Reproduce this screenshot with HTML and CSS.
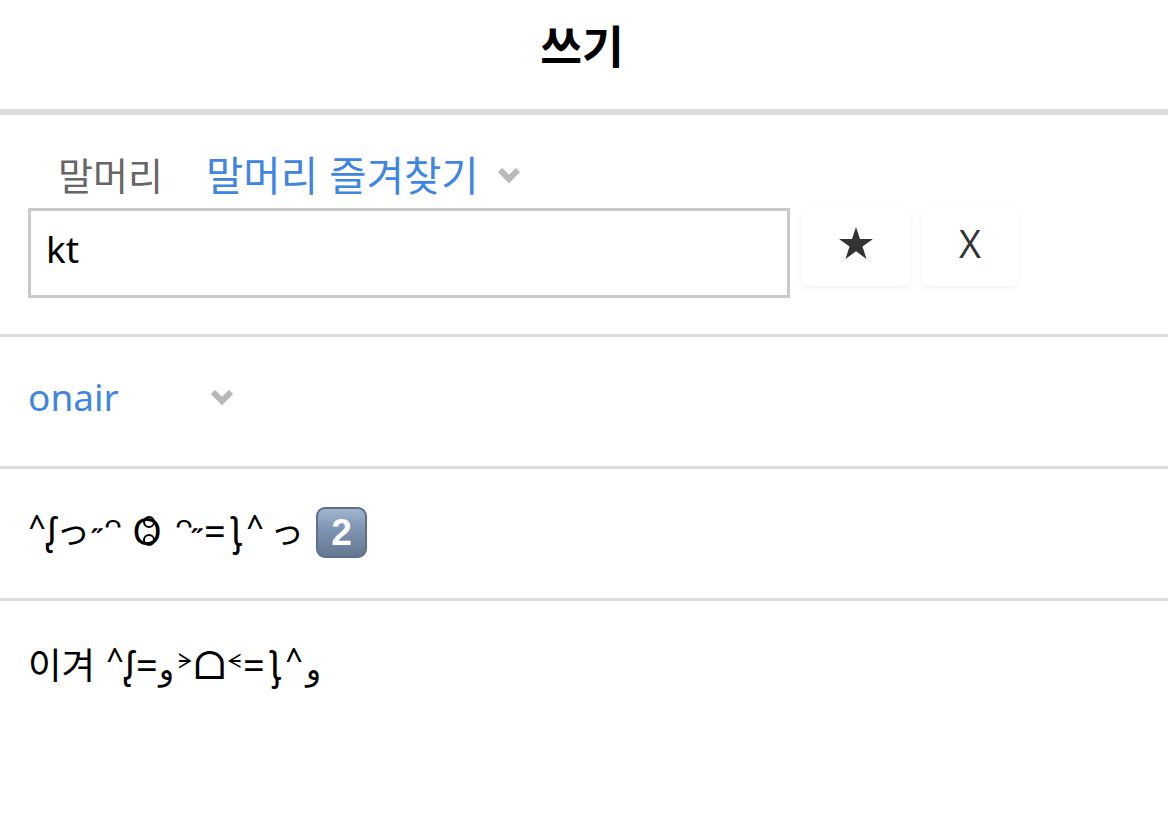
FILE: index.html
```
<!DOCTYPE html>
<html lang="ko">
<head>
  <meta charset="UTF-8" />
  <title>쓰기</title>
  <link rel="stylesheet" href="styles.css">
</head>
<body>

  <header class="header">
    <h1>쓰기</h1>
  </header>

  <form class="write-form">
    <div class="row row-prefix">
      <div class="prefix-line">
        <label class="prefix-label" for="prefix">말머리</label>
        <span class="select">말머리 즐겨찾기</span>
        <svg class="chevron" viewBox="0 0 22 16"><path d="M2 2L11 11L20 2" /></svg>
      </div>
      <div class="prefix-input">
        <input type="text" id="prefix" value="kt" />
        <button type="button" class="btn btn-star"><svg viewBox="0 0 34 32"><path d="M17 0L21 12H34L23.5 19.5L27.5 32L17 24.3L6.500 32L10.500 19.500L0 12H13Z" /></svg></button>
        <button type="button" class="btn btn-clear">X</button>
      </div>
    </div>

    <div class="row row-category">
      <span class="select">onair</span>
      <svg class="chevron" viewBox="0 0 22 16"><path d="M2 2L11 11L20 2" /></svg>
    </div>

    <div class="row row-title">
      <span class="g caret">^</span><span class="g esh">ᶘ</span><span class="g tsu">っ</span><span class="g quote">˶</span><span class="g arc">ᵔ</span><span class="g mouth">O</span><span class="g arc">ᵔ</span><span class="g quote">˶</span><span class="g equal">=</span><span class="g ear">ʅ̡</span><span class="g caret">^</span><span class="g tsu last">っ</span>
      <span class="keycap">2</span>
    </div>

    <div class="row row-content">
      <span class="word">이겨</span><span class="g caret">^</span><span class="g esh">ᶘ</span><span class="g equal">=</span><span class="g waw">و</span><span class="g eye">ᗒ</span><span class="g dome">ᗝ</span><span class="g eye">ᗕ</span><span class="g equal">=</span><span class="g ear">ʅ̡</span><span class="g caret">^</span><span class="g waw">و</span>
    </div>
  </form>

</body>
</html>
```
FILE: styles.css
```
* {
  box-sizing: border-box;
}

body {
  margin: 0;
  font-family: "Noto Sans", "Noto Sans CJK KR", sans-serif;
  font-size: 38px;
  color: #000;
  background: #fff;
}

.header {
  height: 115px;
  padding: 11px 4px 0 0;
  border-bottom: 6px solid #dcdcdc;
}

h1 {
  margin: 0;
  font-family: "Noto Sans CJK KR", sans-serif;
  font-size: 45.5px;
  line-height: 66px;
  font-weight: 700;
  text-align: center;
}

.row {
  display: flex;
  align-items: center;
  height: 132px;
  padding: 0 28px 7px;
  border-bottom: 3px solid #dcdcdc;
}

.row-prefix {
  display: block;
  height: 222px;
  padding-top: 29px;
}

.prefix-line {
  display: flex;
  align-items: center;
  height: 60px;
  margin-bottom: 4px;
  padding-left: 30px;
  font-family: "Noto Sans CJK KR", sans-serif;
  line-height: 60px;
}

.prefix-label {
  width: 148px;
  color: #666;
}

.select {
  color: #3f86e2;
}

.prefix-line .select {
  width: 292px;
  font-size: 40.6px;
  white-space: nowrap;
}

.chevron {
  width: 22px;
  height: 16px;
  fill: none;
  stroke: #b9b9b9;
  stroke-width: 6;
}

.prefix-line .chevron {
  margin-top: 3px;
}

.prefix-input {
  display: flex;
  gap: 12px;
}

.prefix-input input {
  width: 762px;
  height: 90px;
  padding: 0 15px 9px;
  border: 3px solid #c9c9c9;
  font: inherit;
  font-size: 37px;
}

.btn {
  height: 78px;
  padding: 0 0 7px;
  border: none;
  border-radius: 6px;
  background: #fff;
  box-shadow: 0 2px 6px rgba(0, 0, 0, 0.06);
  color: #333;
  font: 38px "Open Sans", sans-serif;
}

.btn-star {
  width: 108px;
}

.btn-star svg {
  width: 34px;
  height: 32px;
  fill: #333;
}

.btn-clear {
  width: 96px;
  padding-bottom: 8px;
}

.row-category .select {
  width: 183px;
  padding-bottom: 4px;
  font-size: 37px;
}

/* kaomoji pieces */
.g {
  display: inline-block;
  direction: ltr;
  font-family: "Noto Sans", "DejaVu Sans", "Noto Sans CJK JP", sans-serif;
  text-align: center;
  white-space: nowrap;
}

.caret {
  width: 18px;
  padding-bottom: 10px;
  font-size: 30px;
  font-weight: 500;
}

.esh {
  width: 12px;
}

.tsu {
  width: 30px;
  padding-bottom: 2px;
  font-family: "Noto Sans CJK JP", sans-serif;
  font-size: 34px;
}

.esh + .tsu {
  margin: 0 4px 0 -2px;
}

.quote {
  width: 14px;
  font-size: 28px;
  font-weight: 600;
}

.arc {
  width: 15px;
  font-size: 44px;
}

.mouth {
  position: relative;
  width: 56px;
}

/* small rings inside the mouth */
.mouth::before,
.mouth::after {
  content: "";
  position: absolute;
  left: 24px;
  width: 8px;
  height: 8px;
  border: 2px solid #000;
  border-radius: 50%;
}

.mouth::before {
  top: 12px;
}

.mouth::after {
  bottom: 10px;
}

.equal {
  width: 20px;
}

.ear {
  width: 22px;
  padding: 0 0 16px 2px;
}

.last {
  margin-left: 6px;
}

.keycap {
  width: 51px;
  height: 51px;
  margin: 5px 0 0 16px;
  border: 2px solid #5b708e;
  border-radius: 9px;
  background: linear-gradient(#a3b5cd, #7f96b4 40%, #64788f);
  color: #fff;
  font: 700 37px/47px "Liberation Sans", sans-serif;
  text-align: center;
}

.row-content {
  border-bottom: none;
}

.word {
  width: 78px;
  font-family: "Noto Sans CJK KR", sans-serif;
  font-size: 36.5px;
}

.waw {
  width: 21px;
  padding-top: 8px;
  font-size: 31px;
}

.eye {
  width: 17px;
  padding-bottom: 6px;
  font-size: 20px;
}

.dome {
  width: 32px;
}
```
